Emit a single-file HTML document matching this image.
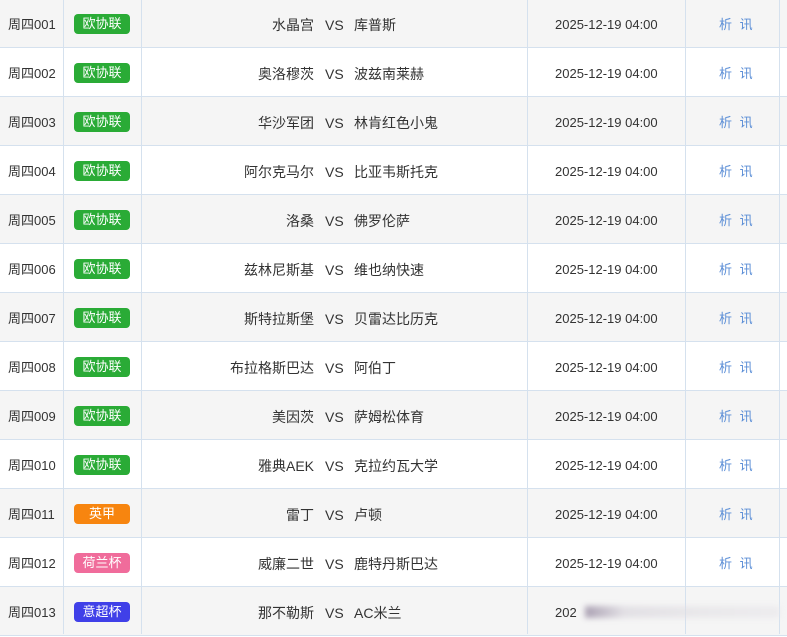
<!DOCTYPE html>
<html><head><meta charset="utf-8"><style>
*{margin:0;padding:0;box-sizing:border-box}
body{width:787px;height:634px;overflow:hidden;background:#fff;font-family:"Liberation Sans","Noto Sans CJK SC",sans-serif;color:#333;position:relative}
.row{position:absolute;left:0;width:787px;height:49px;border-bottom:1px solid #d5e1ee}
.row.g{background:#f5f5f5}
.c{position:absolute;top:2px;height:48px;line-height:48px;font-size:13px}
.no{left:8px}
.bd{position:absolute;left:74px;top:15px;width:56px;height:20px;line-height:20px;border-radius:4px;color:#fff;text-align:center;font-size:13px}
.home{right:473px;font-size:14px;text-align:right}
.vs{left:325px;font-size:14px}
.away{left:354px;font-size:14px}
.dt{left:555px;font-size:13px}
.xx{left:719px;color:#5b8ed6;font-size:13px;letter-spacing:2px}
.vl{position:absolute;top:0;height:634px;width:1px;background:#d5e1ee}
.blur{position:absolute;left:585px;top:606px;width:195px;height:12px;background:linear-gradient(90deg,#7a6a88,#d6d2da 20%,#e2e0e4 60%,#e8e6ea);filter:blur(3px);opacity:.6}
</style></head><body>
<div class="row g" style="top:-1px"><span class="c no">周四001</span><span class="bd" style="background:#2aab36">欧协联</span><span class="c home">水晶宫</span><span class="c vs">VS</span><span class="c away">库普斯</span><span class="c dt">2025-12-19 04:00</span><span class="c xx">析 讯</span></div>
<div class="row" style="top:48px"><span class="c no">周四002</span><span class="bd" style="background:#2aab36">欧协联</span><span class="c home">奥洛穆茨</span><span class="c vs">VS</span><span class="c away">波兹南莱赫</span><span class="c dt">2025-12-19 04:00</span><span class="c xx">析 讯</span></div>
<div class="row g" style="top:97px"><span class="c no">周四003</span><span class="bd" style="background:#2aab36">欧协联</span><span class="c home">华沙军团</span><span class="c vs">VS</span><span class="c away">林肯红色小鬼</span><span class="c dt">2025-12-19 04:00</span><span class="c xx">析 讯</span></div>
<div class="row" style="top:146px"><span class="c no">周四004</span><span class="bd" style="background:#2aab36">欧协联</span><span class="c home">阿尔克马尔</span><span class="c vs">VS</span><span class="c away">比亚韦斯托克</span><span class="c dt">2025-12-19 04:00</span><span class="c xx">析 讯</span></div>
<div class="row g" style="top:195px"><span class="c no">周四005</span><span class="bd" style="background:#2aab36">欧协联</span><span class="c home">洛桑</span><span class="c vs">VS</span><span class="c away">佛罗伦萨</span><span class="c dt">2025-12-19 04:00</span><span class="c xx">析 讯</span></div>
<div class="row" style="top:244px"><span class="c no">周四006</span><span class="bd" style="background:#2aab36">欧协联</span><span class="c home">兹林尼斯基</span><span class="c vs">VS</span><span class="c away">维也纳快速</span><span class="c dt">2025-12-19 04:00</span><span class="c xx">析 讯</span></div>
<div class="row g" style="top:293px"><span class="c no">周四007</span><span class="bd" style="background:#2aab36">欧协联</span><span class="c home">斯特拉斯堡</span><span class="c vs">VS</span><span class="c away">贝雷达比历克</span><span class="c dt">2025-12-19 04:00</span><span class="c xx">析 讯</span></div>
<div class="row" style="top:342px"><span class="c no">周四008</span><span class="bd" style="background:#2aab36">欧协联</span><span class="c home">布拉格斯巴达</span><span class="c vs">VS</span><span class="c away">阿伯丁</span><span class="c dt">2025-12-19 04:00</span><span class="c xx">析 讯</span></div>
<div class="row g" style="top:391px"><span class="c no">周四009</span><span class="bd" style="background:#2aab36">欧协联</span><span class="c home">美因茨</span><span class="c vs">VS</span><span class="c away">萨姆松体育</span><span class="c dt">2025-12-19 04:00</span><span class="c xx">析 讯</span></div>
<div class="row" style="top:440px"><span class="c no">周四010</span><span class="bd" style="background:#2aab36">欧协联</span><span class="c home">雅典AEK</span><span class="c vs">VS</span><span class="c away">克拉约瓦大学</span><span class="c dt">2025-12-19 04:00</span><span class="c xx">析 讯</span></div>
<div class="row g" style="top:489px"><span class="c no">周四011</span><span class="bd" style="background:#f7850f">英甲</span><span class="c home">雷丁</span><span class="c vs">VS</span><span class="c away">卢顿</span><span class="c dt">2025-12-19 04:00</span><span class="c xx">析 讯</span></div>
<div class="row" style="top:538px"><span class="c no">周四012</span><span class="bd" style="background:#f06c9b">荷兰杯</span><span class="c home">威廉二世</span><span class="c vs">VS</span><span class="c away">鹿特丹斯巴达</span><span class="c dt">2025-12-19 04:00</span><span class="c xx">析 讯</span></div>
<div class="row g" style="top:587px"><span class="c no">周四013</span><span class="bd" style="background:#4040e8">意超杯</span><span class="c home">那不勒斯</span><span class="c vs">VS</span><span class="c away">AC米兰</span><span class="c dt">202</span></div>
<div class="vl" style="left:63px"></div><div class="vl" style="left:141px"></div><div class="vl" style="left:527px"></div><div class="vl" style="left:685px"></div><div class="vl" style="left:779px"></div>
<div class="blur"></div>
</body></html>
